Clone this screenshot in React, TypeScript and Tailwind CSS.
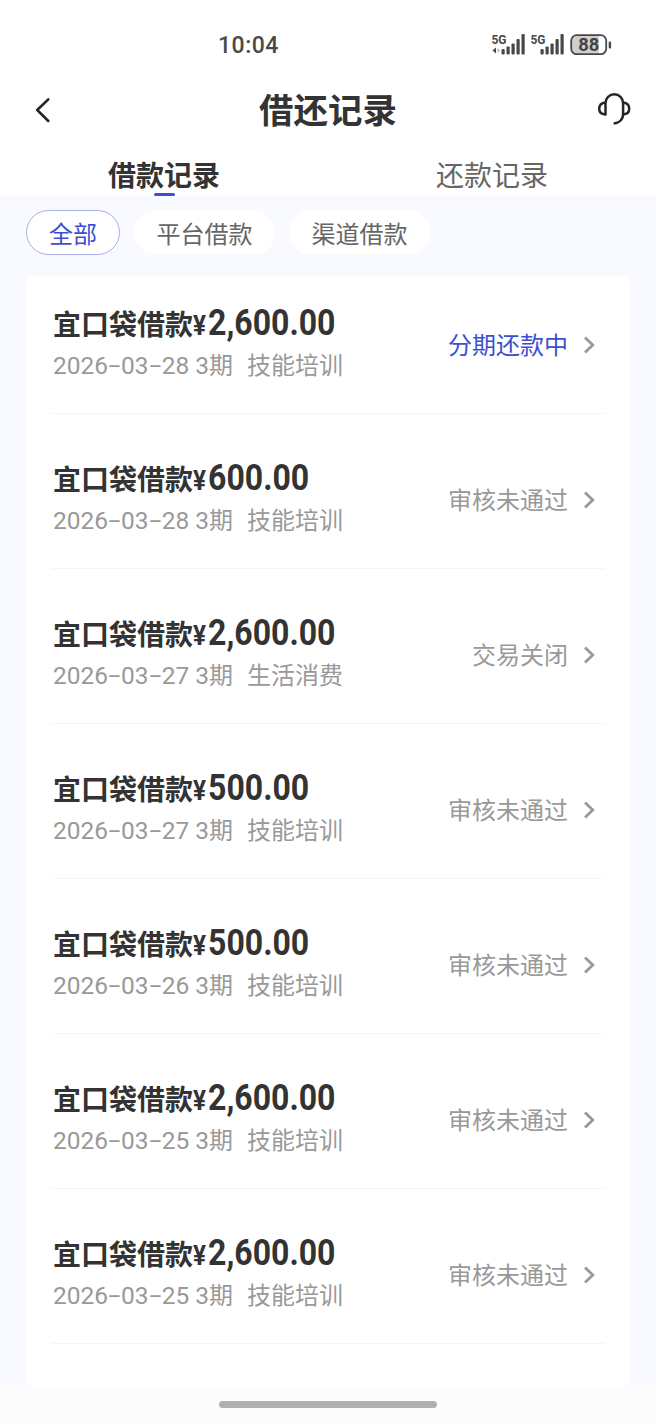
import { useState } from "react";

interface LoanRecord {
  id: number;
  amount: string;
  date: string;
  periods: string;
  purpose: string;
  status: string;
  active?: boolean;
}

const RECORDS: LoanRecord[] = [
  { id: 1, amount: "2,600.00", date: "2026-03-28", periods: "3", purpose: "技能培训", status: "分期还款中", active: true },
  { id: 2, amount: "600.00", date: "2026-03-28", periods: "3", purpose: "技能培训", status: "审核未通过" },
  { id: 3, amount: "2,600.00", date: "2026-03-27", periods: "3", purpose: "生活消费", status: "交易关闭" },
  { id: 4, amount: "500.00", date: "2026-03-27", periods: "3", purpose: "技能培训", status: "审核未通过" },
  { id: 5, amount: "500.00", date: "2026-03-26", periods: "3", purpose: "技能培训", status: "审核未通过" },
  { id: 6, amount: "2,600.00", date: "2026-03-25", periods: "3", purpose: "技能培训", status: "审核未通过" },
  { id: 7, amount: "2,600.00", date: "2026-03-25", periods: "3", purpose: "技能培训", status: "审核未通过" },
];

const FILTERS = ["全部", "平台借款", "渠道借款"];
const TABS = ["借款记录", "还款记录"];

function SignalIcon({ data = false }: { data?: boolean }) {
  return (
    <svg width="35" height="24" viewBox="0 0 35 24" fill="#484848">
      <text x="-0.5" y="10.5" fontSize="13" fontWeight="700" textLength="15" lengthAdjust="spacingAndGlyphs" className="font-['Roboto',sans-serif]">
        5G
      </text>
      {data && (
        <>
          <path d="M0.5 17.5L4 14.5V20.5Z" />
          <path d="M8 17.5L5.5 15V20Z" fill="#b5b5b5" />
        </>
      )}
      <rect x="9.5" y="16" width="3.2" height="5.5" rx="1" />
      <rect x="14.5" y="13.5" width="3.2" height="8" rx="1" />
      <rect x="19.5" y="10.5" width="3.2" height="11" rx="1" />
      <rect x="24.5" y="6" width="3.2" height="15.5" rx="1" />
      <rect x="29.5" y="1" width="3.2" height="20.5" rx="1" />
    </svg>
  );
}

function BatteryIcon() {
  return (
    <svg width="43" height="22" viewBox="0 0 43 22">
      <path d="M7 2H29V20H7a5 5 0 0 1-5-5V7a5 5 0 0 1 5-5Z" fill="#cfcfcf" />
      <rect x="1.2" y="1.2" width="35" height="19" rx="5.5" fill="none" stroke="#484848" strokeWidth="1.8" />
      <rect x="38.7" y="7.5" width="2.4" height="7" rx="1" fill="#484848" />
      <text x="8.2" y="17" fontSize="17.5" fontWeight="700" fill="#444444" textLength="21" lengthAdjust="spacingAndGlyphs" className="font-['Roboto',sans-serif]">
        88
      </text>
    </svg>
  );
}

function StatusBar() {
  return (
    <div className="flex h-[78px] items-start justify-between pl-[218px] pr-[43px]">
      <span className="mt-[32px] font-['Roboto',sans-serif] text-[23px] font-medium leading-7 tracking-[0.5px] text-[#4a4a4a]">
        10:04
      </span>
      <div className="mt-[33px] flex items-start">
        <div className="flex gap-[4px]">
          <SignalIcon data />
          <SignalIcon />
        </div>
        <div className="mt-px ml-[4px]">
          <BatteryIcon />
        </div>
      </div>
    </div>
  );
}

function Header() {
  return (
    <header className="flex h-[64px] items-center justify-between pl-[34px] pr-[24px]">
      <button aria-label="返回" className="w-[26px]">
        <svg width="18" height="26" viewBox="0 0 18 26" fill="none" stroke="#222222" strokeWidth="2.5" strokeLinecap="round" strokeLinejoin="round">
          <path d="M14.3 2.3L3.2 13L14.3 24" />
        </svg>
      </button>
      <h1 className="pb-[4px] text-[34.5px] font-bold leading-[50px] text-[#333333]">借还记录</h1>
      <button aria-label="客服" className="pb-[2px]">
        <svg width="36" height="34" viewBox="0 0 36 34" fill="none" stroke="#262626" strokeWidth="2.5" strokeLinecap="butt" strokeLinejoin="round">
          <path d="M9.5 23.5V11a8.8 8.8 0 0 1 17.6 0V22c0 5.5-4 9-9.5 9.5" />
          <path d="M9.5 10.5C5.5 11 3.2 13.6 3.2 16.8S5.5 22.3 9.5 22.5" />
          <path d="M27.1 10.5C31 11 33.2 13.6 33.2 16.8S31 22.3 27.1 22.5" />
        </svg>
      </button>
    </header>
  );
}

function RecordRow({ record }: { record: LoanRecord }) {
  return (
    <li className="flex h-[155px] items-start justify-between border-b border-[#f5f5f5]">
      <div className="mt-[43px] pl-px">
        <div className="flex h-[42px] items-baseline whitespace-nowrap font-bold text-[#333333]">
          <span className="text-[28px] leading-[42px]">宜口袋借款</span>
          <span className="w-[15px] origin-left scale-x-[0.9] font-['Roboto',sans-serif] text-[27px] leading-none">¥</span>
          <span className="origin-left scale-x-[0.89] font-['Roboto',sans-serif] text-[36px] leading-none">{record.amount}</span>
        </div>
        <div className="mt-[2px] flex h-[36px] items-baseline whitespace-nowrap text-2xl leading-[36px] text-[#999999]">
          <span className="flex font-['Roboto',sans-serif] text-[24.5px]">
            {record.date.split("-").map((part, i) => (
              <span key={i} className="flex">
                {i > 0 && <span className="-mt-px w-[13px] scale-x-[1.75] text-center">-</span>}
                {part}
              </span>
            ))}
          </span>
          <span className="ml-[6px] font-['Roboto',sans-serif] text-[24.5px]">{record.periods}</span>
          <span>期</span>
          <span className="ml-[14px]">{record.purpose}</span>
        </div>
      </div>
      <div className="mt-[68px] flex items-center gap-[15px] pr-[8px]">
        <span className={record.active ? "-mt-px text-2xl leading-9 text-[#3d4fd0]" : "-mt-px text-2xl leading-9 text-[#999999]"}>
          {record.status}
        </span>
        <svg width="13" height="20" viewBox="0 0 13 20" fill="none" stroke="#999999" strokeWidth="2.8" className="mt-px">
          <path d="M2 2.5L9.8 10L2 17.5" />
        </svg>
      </div>
    </li>
  );
}

export default function App() {
  const [tab, setTab] = useState(0);
  const [filter, setFilter] = useState(0);

  return (
    <div className="flex h-[1424px] w-[656px] flex-col overflow-hidden bg-[#f9faff] font-['Noto_Sans_CJK_SC',sans-serif]">
      <div className="bg-white">
        <StatusBar />
        <Header />
        <nav className="grid h-[54px] grid-cols-2">
          {TABS.map((label, i) => (
            <button key={label} onClick={() => setTab(i)} className="flex flex-col items-center pt-[13px]">
              <span className={tab === i ? "text-[28px] font-bold leading-[38px] text-[#333333]" : "text-[28px] leading-[38px] text-[#666666]"}>
                {label}
              </span>
              {tab === i && <span className="h-[3px] w-[21px] rounded-full bg-[#3d4fd0]" />}
            </button>
          ))}
        </nav>
      </div>

      <div className="flex gap-[14px] px-[26px] pt-[14px]">
        {FILTERS.map((label, i) => (
          <button
            key={label}
            onClick={() => setFilter(i)}
            className={
              filter === i
                ? "h-[45px] rounded-full border border-[#a9afe9] bg-white px-[22px] text-2xl leading-[41px] text-[#3d4fd0]"
                : "h-[45px] rounded-full bg-white px-[22.5px] text-2xl leading-[43px] text-[#666666]"
            }
          >
            {label}
          </button>
        ))}
      </div>

      <main className="mx-[26px] mt-[21px] flex-1 overflow-hidden rounded-lg bg-white px-[26px]">
        <ul className="-mt-[17px]">
          {RECORDS.map((record) => (
            <RecordRow key={record.id} record={record} />
          ))}
        </ul>
      </main>

      <footer className="flex h-[38px] shrink-0 justify-center bg-[#fcfcfc] pt-[15px]">
        <div className="h-[7px] w-[218px] rounded-full bg-[#b0b0b0]" />
      </footer>
    </div>
  );
}
